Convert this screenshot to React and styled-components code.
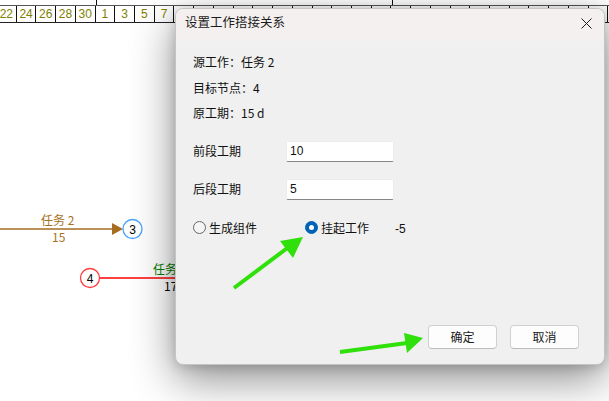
import React from "react";
import styled, { createGlobalStyle } from "styled-components";

const Global = createGlobalStyle`
  html, body { margin: 0; padding: 0; background: #ffffff; }
  body { width: 609px; height: 401px; overflow: hidden; font-family: "Noto Sans CJK SC", "Liberation Sans", sans-serif; }
  #root { width: 609px; height: 401px; }
`;

const Page = styled.div`
  position: relative;
  width: 609px;
  height: 401px;
  background: #fff;
  overflow: hidden;
  display: flex;
  flex-direction: column;
`;

const Timeline = styled.div`
  display: flex;
  flex-direction: column;
  flex: 0 0 auto;
`;

const MonthRow = styled.div`
  display: flex;
  height: 5px;
  border-bottom: 1px solid #555;
`;

const Month = styled.div`
  box-sizing: border-box;
  flex: 0 0 ${(p) => p.$w}px;
  border-right: 1px solid #111;
`;

const DayRow = styled.div`
  display: flex;
  margin-left: -3px;
  height: 16px;
  border-bottom: 1px solid #222;
`;

const Day = styled.div`
  box-sizing: border-box;
  flex: 0 0 19.73px;
  border-right: 1px solid #111;
  color: #808000;
  font-family: "Liberation Sans", sans-serif;
  font-size: 12px;
  line-height: 16px;
  text-align: center;
`;

const Canvas = styled.div`
  position: relative;
  flex: 1;
`;

const EdgeLabel = styled.div`
  position: absolute;
  left: ${(p) => p.$x}px;
  top: ${(p) => p.$y}px;
  color: ${(p) => p.$c};
  font-size: 12px;
  line-height: 14px;
  white-space: nowrap;
  font-family: "Noto Sans CJK SC", sans-serif;
`;

const DiagramSvg = styled.svg`
  position: absolute;
  left: 0;
  top: 0;
`;

const Dialog = styled.div`
  position: absolute;
  left: 175px;
  top: 8px;
  width: 430px;
  height: 357px;
  box-sizing: border-box;
  border: 1px solid #c4c4c4;
  border-radius: 8px;
  background: #f0f0f0;
  box-shadow: 0 14px 44px rgba(0, 0, 0, 0.45), 0 2px 12px rgba(0, 0, 0, 0.16);
  display: flex;
  flex-direction: column;
  overflow: hidden;
`;

const TitleBar = styled.div`
  height: 32px;
  flex: 0 0 32px;
  background: #f4f0ef;
  display: flex;
  align-items: center;
  justify-content: space-between;
  padding: 0 9px 0 9px;
  box-sizing: border-box;
`;

const Title = styled.div`
  font-size: 12.5px;
  line-height: 16px;
  color: #1b1b1b;
  margin-top: -6px;
`;

const CloseBtn = styled.div`
  width: 16px;
  height: 16px;
  display: flex;
  align-items: center;
  justify-content: center;
  margin-top: -4px;
  margin-right: 1px;
`;

const Body = styled.div`
  flex: 1;
  display: flex;
  flex-direction: column;
  padding: 13px 25px 15px 17px;
  font-size: 12px;
  color: #111;
`;

const InfoLine = styled.div`
  height: 16px;
  line-height: 16px;
  margin-bottom: 9.6px;
`;

const Fields = styled.div`
  display: flex;
  flex-direction: column;
  gap: 17px;
  margin-top: 10px;
`;

const FieldRow = styled.div`
  display: grid;
  grid-template-columns: 93px 108px;
  align-items: center;
`;

const Label = styled.div`
  line-height: 16px;
`;

const Input = styled.div`
  box-sizing: border-box;
  height: 21px;
  background: #fff;
  border: 1px solid #ececec;
  border-bottom: 1px solid #868686;
  border-radius: 2px;
  padding-left: 3px;
  line-height: 19px;
  font-family: "Liberation Sans", sans-serif;
  font-size: 12px;
  color: #111;
`;

const RadioRow = styled.div`
  display: flex;
  align-items: center;
  height: 16px;
  margin-top: 20px;
`;

const RadioItem = styled.div`
  display: flex;
  align-items: center;
  gap: 3px;
  width: ${(p) => p.$w}px;
`;

const RadioCircle = styled.span`
  box-sizing: border-box;
  width: 13px;
  height: 13px;
  border-radius: 50%;
  display: inline-flex;
  align-items: center;
  justify-content: center;
  background: ${(p) => (p.$on ? "#0063b8" : "#f5f5f5")};
  border: 1px solid ${(p) => (p.$on ? "#0063b8" : "#666")};
  &::after {
    content: "";
    display: ${(p) => (p.$on ? "block" : "none")};
    width: 5px;
    height: 5px;
    border-radius: 50%;
    background: #fff;
  }
`;

const RadioLabel = styled.span`
  line-height: 16px;
`;

const Value = styled.span`
  font-family: "Liberation Sans", sans-serif;
  font-size: 12px;
  margin-top: 2px;
`;

const Buttons = styled.div`
  margin-top: auto;
  display: flex;
  justify-content: flex-end;
  gap: 13px;
`;

const Button = styled.button`
  box-sizing: border-box;
  width: 69px;
  height: 24px;
  background: #fdfdfd;
  border: 1px solid #d0d0d0;
  border-bottom-color: #bcbcbc;
  border-radius: 4px;
  font-family: "Noto Sans CJK SC", sans-serif;
  font-size: 12px;
  color: #1a1a1a;
  padding: 0;
  line-height: 20px;
`;

const Overlay = styled.svg`
  position: absolute;
  left: 0;
  top: 0;
  pointer-events: none;
`;

const visibleDays = [22, 24, 26, 28, 30, 1, 3, 5, 7];
const hiddenCells = 22;

export default function App() {
  return (
    <Page>
      <Global />
      <Timeline>
        <MonthRow>
          <Month $w={97} />
          <Month $w={296} />
        </MonthRow>
        <DayRow>
          {visibleDays.map((d, i) => (
            <Day key={i}>{d}</Day>
          ))}
          {Array.from({ length: hiddenCells }).map((_, i) => (
            <Day key={"h" + i} />
          ))}
        </DayRow>
      </Timeline>
      <Canvas>
        <DiagramSvg width="609" height="378" viewBox="0 23 609 378">
          <line x1="0" y1="229" x2="114" y2="229" stroke="#a66c1f" strokeWidth="1.3" />
          <polygon points="112,223 123,229 112,235" fill="#a66c1f" />
          <circle cx="132.5" cy="229" r="9.5" fill="#fff" stroke="#4aa3ff" strokeWidth="1.3" />
          <text x="132.5" y="233.5" textAnchor="middle" fontSize="12" fontFamily="Liberation Sans, sans-serif" fill="#000">3</text>
          <line x1="100" y1="278" x2="180" y2="278" stroke="#ff0000" strokeWidth="1.3" />
          <circle cx="90" cy="278" r="9.5" fill="#fff" stroke="#ff3b3b" strokeWidth="1.3" />
          <text x="90" y="282.5" textAnchor="middle" fontSize="12" fontFamily="Liberation Sans, sans-serif" fill="#000">4</text>
        </DiagramSvg>
        <EdgeLabel $x={41} $y={190} $c="#a8711f">任务 2</EdgeLabel>
        <EdgeLabel $x={52} $y={207} $c="#a8711f">15</EdgeLabel>
        <EdgeLabel $x={153} $y={239} $c="#008000">任务</EdgeLabel>
        <EdgeLabel $x={164} $y={256} $c="#000">17</EdgeLabel>
      </Canvas>
      <Dialog>
        <TitleBar>
          <Title>设置工作搭接关系</Title>
          <CloseBtn>
            <svg width="11" height="11" viewBox="0 0 11 11">
              <path d="M0.5 0.5 L10.5 10.5 M10.5 0.5 L0.5 10.5" stroke="#1a1a1a" strokeWidth="1" />
            </svg>
          </CloseBtn>
        </TitleBar>
        <Body>
          <InfoLine>源工作：任务 2</InfoLine>
          <InfoLine>目标节点：4</InfoLine>
          <InfoLine>原工期：15 d</InfoLine>
          <Fields>
            <FieldRow>
              <Label>前段工期</Label>
              <Input>10</Input>
            </FieldRow>
            <FieldRow>
              <Label>后段工期</Label>
              <Input>5</Input>
            </FieldRow>
          </Fields>
          <RadioRow>
            <RadioItem $w={112}>
              <RadioCircle />
              <RadioLabel>生成组件</RadioLabel>
            </RadioItem>
            <RadioItem $w={90}>
              <RadioCircle $on />
              <RadioLabel>挂起工作</RadioLabel>
            </RadioItem>
            <Value>-5</Value>
          </RadioRow>
          <Buttons>
            <Button>确定</Button>
            <Button>取消</Button>
          </Buttons>
        </Body>
      </Dialog>
      <Overlay width="609" height="401" viewBox="0 0 609 401">
        <line x1="234" y1="288" x2="290" y2="246" stroke="#2fe00a" strokeWidth="4" />
        <polygon points="303,237 293,258 280,241" fill="#2fe00a" />
        <line x1="340" y1="352" x2="407" y2="343" stroke="#2fe00a" strokeWidth="4" />
        <polygon points="423,338 407,353 404,333" fill="#2fe00a" />
      </Overlay>
    </Page>
  );
}
